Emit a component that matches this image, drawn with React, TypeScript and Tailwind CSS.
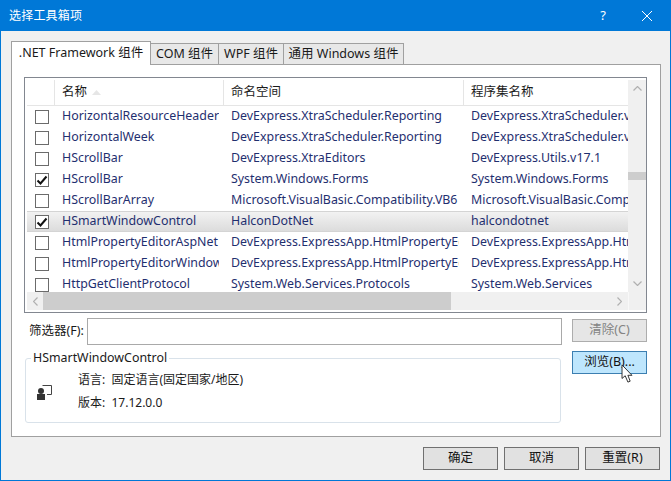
import { Fragment } from 'react';

const rows = [
  { name: 'HorizontalResourceHeader', ns: 'DevExpress.XtraScheduler.Reporting', asm: 'DevExpress.XtraScheduler.v' },
  { name: 'HorizontalWeek', ns: 'DevExpress.XtraScheduler.Reporting', asm: 'DevExpress.XtraScheduler.v' },
  { name: 'HScrollBar', ns: 'DevExpress.XtraEditors', asm: 'DevExpress.Utils.v17.1' },
  { name: 'HScrollBar', ns: 'System.Windows.Forms', asm: 'System.Windows.Forms', checked: true },
  { name: 'HScrollBarArray', ns: 'Microsoft.VisualBasic.Compatibility.VB6', asm: 'Microsoft.VisualBasic.Comp' },
  { name: 'HSmartWindowControl', ns: 'HalconDotNet', asm: 'halcondotnet', checked: true, selected: true },
  { name: 'HtmlPropertyEditorAspNet', ns: 'DevExpress.ExpressApp.HtmlPropertyEditor', asm: 'DevExpress.ExpressApp.Htm' },
  { name: 'HtmlPropertyEditorWindows', ns: 'DevExpress.ExpressApp.HtmlPropertyEditor', asm: 'DevExpress.ExpressApp.Htm' },
  { name: 'HttpGetClientProtocol', ns: 'System.Web.Services.Protocols', asm: 'System.Web.Services' },
];

const tabs = [
  { label: 'COM 组件', width: 'w-[68px]' },
  { label: 'WPF 组件', width: 'w-[65px]' },
  { label: '通用 Windows 组件', width: 'w-[120px]' },
];

function Check({ checked }: { checked?: boolean }) {
  return (
    <div className="w-[14px] h-[14px] border border-[#6b6b6b] bg-white flex items-center justify-center">
      {checked && (
        <svg width="12" height="12" viewBox="0 0 12 12">
          <path d="M1.5 6.5 L4.5 9.5 L10.5 2.5" fill="none" stroke="#111" strokeWidth="2" />
        </svg>
      )}
    </div>
  );
}

function Btn({ label, className = '' }: { label: string; className?: string }) {
  return (
    <div className={`w-[75px] h-[23px] border flex items-center justify-center ${className}`}>
      {label}
    </div>
  );
}

const defaultBtn = 'border-[#707070] bg-[#e1e1e1] text-[#111]';
const selectedCell = 'bg-gradient-to-b from-[#f2f2f2] to-[#dcdcdc] border-y border-[#d4d4d4]';

export default function App() {
  return (
    <div
      className="w-[671px] h-[481px] bg-[#f0f0f0] border border-[#0078d7] border-t-0 flex flex-col text-[12.5px] text-[#1a1a1a] overflow-hidden relative"
      style={{ fontFamily: '"Noto Sans", "Noto Sans CJK SC", sans-serif' }}
    >
      {/* title bar */}
      <div className="h-[31px] -mx-px bg-[#0078d7] text-white flex items-center shrink-0">
        <span className="ml-[9px] text-[12px] tracking-[0.2px]">选择工具箱项</span>
        <span className="ml-auto mr-[35px] text-[13px]">?</span>
        <svg className="mr-[18px]" width="12" height="12" viewBox="0 0 12 12">
          <path d="M1 1 L11 11 M11 1 L1 11" stroke="#fff" strokeWidth="1" fill="none" />
        </svg>
      </div>

      {/* tabs */}
      <div className="flex items-end h-[33px] ml-[10px] shrink-0 relative z-10">
        <div className="w-[140px] h-[24px] -mb-px bg-white border border-[#a0a0a0] border-b-0 flex items-center justify-center">
          .NET Framework 组件
        </div>
        {tabs.map((t) => (
          <div
            key={t.label}
            className={`h-[22px] -mb-px bg-[#e8e8e8] border border-[#a0a0a0] border-l-0 flex items-center justify-center ${t.width}`}
          >
            {t.label}
          </div>
        ))}
      </div>

      {/* tab panel */}
      <div className="w-[650px] h-[373px] ml-[10px] bg-white border border-[#a0a0a0] px-[12px] pt-[12px] shrink-0 relative">
        <div className="w-[623px] h-[236px] border border-[#828790] flex flex-col p-[2px] pr-0">
          <div className="flex flex-1 min-h-0 overflow-hidden">
            <div className="w-[601px] flex flex-col">
              <div className="grid grid-cols-[28px_169px_240px_164px] h-[26px] shrink-0 border-b border-[#e5e5e5]">
                <div className="border-r border-[#e5e5e5]" />
                <div className="border-r border-[#e5e5e5] pl-[7px] flex items-center gap-[5px]">
                  名称
                  <svg width="9" height="5" viewBox="0 0 9 5"><path d="M4.5 0 L9 5 L0 5 Z" fill="#e6e6e6" /></svg>
                </div>
                <div className="border-r border-[#e5e5e5] pl-[7px] flex items-center">命名空间</div>
                <div className="pl-[7px] flex items-center">程序集名称</div>
              </div>
              <div className="grid grid-cols-[28px_169px_240px_164px] auto-rows-[21px] text-[12.4px] text-[#1f2f6f]">
                {rows.map((r, i) => (
                  <Fragment key={i}>
                    <div className={`flex items-center pl-[8px] ${r.selected ? selectedCell : ''}`}>
                      <Check checked={r.checked} />
                    </div>
                    <div className={`pl-[7px] flex items-center min-w-0 overflow-hidden whitespace-nowrap ${r.selected ? selectedCell : ''}`}>
                      <span className="w-[157px] shrink-0 overflow-hidden">{r.name}</span>
                    </div>
                    <div className={`pl-[7px] flex items-center min-w-0 overflow-hidden whitespace-nowrap ${r.selected ? selectedCell : ''}`}>
                      <span className="w-[228px] shrink-0 overflow-hidden">{r.ns}</span>
                    </div>
                    <div className={`pl-[7px] flex items-center min-w-0 overflow-hidden whitespace-nowrap ${r.selected ? selectedCell : ''}`}>
                      {r.asm}
                    </div>
                  </Fragment>
                ))}
              </div>
            </div>

            {/* vertical scrollbar */}
            <div className="w-[18px] bg-[#f0f0f0] flex flex-col items-center">
              <svg className="mt-[6px]" width="9" height="5" viewBox="0 0 9 5"><path d="M0.5 4.5 L4.5 0.5 L8.5 4.5" fill="none" stroke="#b0b0b0" strokeWidth="1.2" /></svg>
              <div className="mt-[81px] w-full h-[8px] bg-[#cdcdcd]" />
              <svg className="mt-auto mb-[6px]" width="9" height="5" viewBox="0 0 9 5"><path d="M0.5 0.5 L4.5 4.5 L8.5 0.5" fill="none" stroke="#b0b0b0" strokeWidth="1.2" /></svg>
            </div>
          </div>

          {/* horizontal scrollbar */}
          <div className="h-[18px] flex items-center bg-[#f0f0f0] shrink-0">
            <div className="w-[16px] flex justify-center">
              <svg width="5" height="9" viewBox="0 0 5 9"><path d="M4.5 0.5 L0.5 4.5 L4.5 8.5" fill="none" stroke="#b0b0b0" strokeWidth="1.2" /></svg>
            </div>
            <div className="w-[408px] h-full bg-[#cdcdcd]" />
            <div className="w-[177px] flex justify-end pr-[6px]">
              <svg width="5" height="9" viewBox="0 0 5 9"><path d="M0.5 0.5 L4.5 4.5 L0.5 8.5" fill="none" stroke="#b0b0b0" strokeWidth="1.2" /></svg>
            </div>
            <div className="w-[18px] h-full border-l border-[#f8f8f8]" />
          </div>
        </div>

        <div className="flex mt-[5px] h-[27px]">
          <span className="w-[63px] pl-[5px] flex items-center">筛选器(F):</span>
          <div className="w-[475px] h-[27px] border border-[#a9a9a9] bg-white" />
          <Btn label="清除(C)" className="ml-[10px] mt-[1px] bg-[#e6e6e6] border-[#adadad] text-[#838383]" />
        </div>

        <div className="flex mt-[6px]">
          <div className="ml-[1px] mt-[7px] w-[536px] h-[65px] border border-[#d9e2ea] rounded-[3px] relative flex items-center">
            <span className="absolute -top-[10px] left-[5px] bg-white px-[2px] leading-[18px] text-[12.4px]">HSmartWindowControl</span>
            <svg className="ml-[11px] mt-[3px]" width="15" height="16" viewBox="0 0 15 16">
              <path d="M5.5 1.5 H14.5 V10.5 H10" fill="none" stroke="#444" />
              <circle cx="4" cy="7" r="3" fill="#333" />
              <rect x="0" y="10" width="8" height="6" fill="#333" />
            </svg>
            <div className="ml-[26px] mt-[2px] flex flex-col gap-[3px] text-[12px] leading-[20px]">
              <span>语言:&nbsp;&nbsp;固定语言(固定国家/地区)</span>
              <span>版本:&nbsp;&nbsp;17.12.0.0</span>
            </div>
          </div>
          <Btn label="浏览(B)..." className="ml-[11px] bg-[#bee6fd] border-[#3c7fb1] text-[#111]" />
        </div>
      </div>

      {/* footer */}
      <div className="flex justify-end gap-[6px] mt-[10px] mr-[10px]">
        <Btn label="确定" className={defaultBtn} />
        <Btn label="取消" className={defaultBtn} />
        <Btn label="重置(R)" className={defaultBtn} />
      </div>

      {/* mouse pointer */}
      <svg className="absolute left-[619px] top-[364px]" width="14" height="19" viewBox="0 0 13 21">
        <path d="M1 1 V16 L4.5 13 L7.5 20 L10 19 L7.5 12.5 H12 Z" fill="#fff" stroke="#222" strokeWidth="1" />
      </svg>
    </div>
  );
}
